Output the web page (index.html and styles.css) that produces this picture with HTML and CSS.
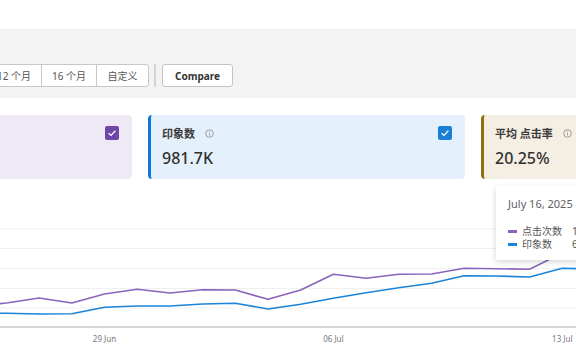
FILE: index.html
```html
<!DOCTYPE html>
<html lang="zh-CN">
<head>
    <meta charset="UTF-8">
    <meta name="viewport" content="width=device-width, initial-scale=1.0">
    <title>Search performance</title>
    <link rel="stylesheet" href="styles.css">
</head>
<body>

<div class="topbar"></div>

<!-- Date range filters -->
<div class="toolbar">
    <div class="range-group">
        <button class="range-btn">12 个月</button>
        <button class="range-btn">16 个月</button>
        <button class="range-btn">自定义</button>
    </div>
    <span class="divider"></span>
    <button class="compare-btn">Compare</button>
</div>

<!-- Metric cards -->
<div class="cards">
    <div class="card card-clicks">
        <div class="card-head">
            <span class="card-label">点击次数</span>
            <svg class="info" viewBox="0 0 10 10"><circle cx="5" cy="5" r="4.2"/><line x1="5" y1="4.3" x2="5" y2="7.2"/><circle class="dot" cx="5" cy="2.8" r="0.55"/></svg>
            <span class="check check-purple"><svg viewBox="0 0 14 14"><path d="M3.6 7.2 L6 9.4 L10.4 4.8"/></svg></span>
        </div>
        <div class="card-value">198.8K</div>
    </div>
    <div class="card card-impr">
        <div class="card-head">
            <span class="card-label">印象数</span>
            <svg class="info" viewBox="0 0 10 10"><circle cx="5" cy="5" r="4.2"/><line x1="5" y1="4.3" x2="5" y2="7.2"/><circle class="dot" cx="5" cy="2.8" r="0.55"/></svg>
            <span class="check check-blue"><svg viewBox="0 0 14 14"><path d="M3.6 7.2 L6 9.4 L10.4 4.8"/></svg></span>
        </div>
        <div class="card-value">981.7K</div>
    </div>
    <div class="card card-ctr">
        <div class="card-head">
            <span class="card-label">平均 点击率</span>
            <svg class="info" viewBox="0 0 10 10"><circle cx="5" cy="5" r="4.2"/><line x1="5" y1="4.3" x2="5" y2="7.2"/><circle class="dot" cx="5" cy="2.8" r="0.55"/></svg>
        </div>
        <div class="card-value">20.25%</div>
    </div>
</div>

<!-- Trend chart -->
<div class="chart">
    <svg class="chart-svg" width="576" height="171" viewBox="0 0 576 171">
        <g class="grid">
            <line x1="0" y1="44" x2="576" y2="44"/>
            <line x1="0" y1="63.5" x2="576" y2="63.5"/>
            <line x1="0" y1="83.5" x2="576" y2="83.5"/>
            <line x1="0" y1="103.5" x2="576" y2="103.5"/>
            <line x1="0" y1="123" x2="576" y2="123"/>
        </g>
        <line class="baseline" x1="0" y1="142" x2="576" y2="142"/>
        <polyline class="line-clicks" points="-26.3,121 6.4,118 39.1,113 71.8,118 104.5,109 137.2,104.3 169.9,108 202.6,104.7 235.3,105 268,114.3 300.7,105 333.4,89.3 366.1,93.3 398.8,89.3 431.5,89 464.2,83.3 496.9,83.7 529.6,84.3 562.3,68 595,70"/>
        <polyline class="line-impr" points="-26.3,128 6.4,128.3 39.1,129 71.8,128.7 104.5,122.3 137.2,121 169.9,121 202.6,119 235.3,118.3 268,124 300.7,119.3 333.4,113.3 366.1,107.7 398.8,102.7 431.5,98.3 464.2,90.7 496.9,91 529.6,92 562.3,83.3 595,84"/>
        <g class="axis-labels">
            <text x="104.5" y="157">29 Jun</text>
            <text x="333.4" y="157">06 Jul</text>
            <text x="562.3" y="157">13 Jul</text>
        </g>
    </svg>

    <div class="tooltip">
        <div class="tip-date">July 16, 2025</div>
        <div class="tip-row">
            <span class="swatch swatch-clicks"></span>
            <span class="tip-name">点击次数</span>
            <span class="tip-num">13,284</span>
        </div>
        <div class="tip-row">
            <span class="swatch swatch-impr"></span>
            <span class="tip-name">印象数</span>
            <span class="tip-num">65,402</span>
        </div>
    </div>
</div>

</body>
</html>
```

FILE: styles.css
```css
/* Reset */
* {
    margin: 0;
    padding: 0;
    box-sizing: border-box;
}

body {
    font-family: 'Noto Sans', 'Noto Sans CJK SC', sans-serif;
    background: #ffffff;
    color: #323130;
    width: 576px;
    height: 356px;
    overflow: hidden;
}

.topbar {
    height: 29px;
}

/* Toolbar with range buttons */
.toolbar {
    height: 69px;
    background-color: #f3f3f3;
    border-top: 1px solid #ebebeb;
    padding-top: 34px;
    display: flex;
    align-items: flex-start;
    margin-left: -14px;
}

.range-group {
    display: flex;
}

.range-btn {
    width: 56px;
    height: 23px;
    background: #ffffff;
    border: 1px solid #c8c8c8;
    margin-left: -1px;
    font-family: inherit;
    font-size: 10px;
    color: #555;
}

.range-btn:first-child {
    margin-left: 0;
}

.range-btn:last-child {
    width: 53px;
    border-radius: 0 3px 3px 0;
}

.divider {
    width: 2px;
    height: 23px;
    background-color: #d4d4d4;
    margin: 0 6px 0 5px;
}

.compare-btn {
    width: 71px;
    height: 23px;
    background: #ffffff;
    border: 1px solid #c4c4c4;
    border-radius: 3px;
    font-family: inherit;
    font-size: 10px;
    font-weight: 700;
    color: #333;
}

/* Metric cards */
.cards {
    display: flex;
    gap: 16px;
    margin-top: 17px;
    margin-left: -185px;
}

.card {
    flex: 0 0 317px;
    height: 64px;
    border-radius: 4px;
    padding: 11px 13px 0 11px;
}

.card-clicks {
    background-color: #efe9f6;
    border-left: 3px solid #8764b8;
}

.card-impr {
    background-color: #e4f0fb;
    border-left: 3px solid #0f78d4;
}

.card-ctr {
    background-color: #f4eee3;
    border-left: 3px solid #946f12;
}

.card-head {
    display: flex;
    align-items: center;
    height: 14px;
}

.card-label {
    font-size: 11px;
    font-weight: 600;
    color: #3b3a39;
}

.info {
    width: 9px;
    height: 9px;
    margin-left: 10px;
    fill: none;
    stroke: #8a8a8a;
    stroke-width: 0.9;
}

.info .dot {
    fill: #8a8a8a;
    stroke: none;
}

.check {
    width: 14px;
    height: 14px;
    border-radius: 2px;
    margin-left: auto;
    display: flex;
}

.check svg {
    width: 14px;
    height: 14px;
    fill: none;
    stroke: #ffffff;
    stroke-width: 1.3;
}

.check-purple {
    background-color: #6f45aa;
}

.check-blue {
    background-color: #1a7fd7;
}

.card-value {
    margin-top: 8px;
    font-size: 16px;
    line-height: 20px;
    font-weight: 500;
    color: #323130;
}

/* Chart */
.chart {
    position: relative;
    margin-top: 6px;
    height: 171px;
}

.chart-svg {
    display: block;
}

.grid line {
    stroke: #f0f0f0;
    stroke-width: 1;
}

.baseline {
    stroke: #c9c9c9;
    stroke-width: 1.5;
}

.line-clicks,
.line-impr {
    fill: none;
    stroke-width: 1.6;
    stroke-linejoin: round;
}

.line-clicks {
    stroke: #8a63bd;
}

.line-impr {
    stroke: #1b84d8;
}

.axis-labels text {
    font-family: 'Noto Sans', sans-serif;
    font-size: 8px;
    fill: #777;
    text-anchor: middle;
}

/* Hover tooltip */
.tooltip {
    position: absolute;
    left: 496px;
    top: 1px;
    width: 130px;
    height: 74px;
    background: #ffffff;
    box-shadow: 0 2px 6px rgba(0, 0, 0, 0.16);
    padding: 10px 0 0 12px;
    font-size: 10px;
    color: #555;
}

.tip-date {
    font-size: 11px;
    line-height: 16px;
    color: #616161;
    margin-bottom: 13px;
}

.tip-row {
    display: flex;
    align-items: center;
    height: 13px;
    line-height: 13px;
}

.swatch {
    width: 9px;
    height: 3px;
    margin-right: 5px;
}

.swatch-clicks {
    background-color: #8a63bd;
}

.swatch-impr {
    background-color: #1b84d8;
}

.tip-name {
    width: 50px;
}
```
